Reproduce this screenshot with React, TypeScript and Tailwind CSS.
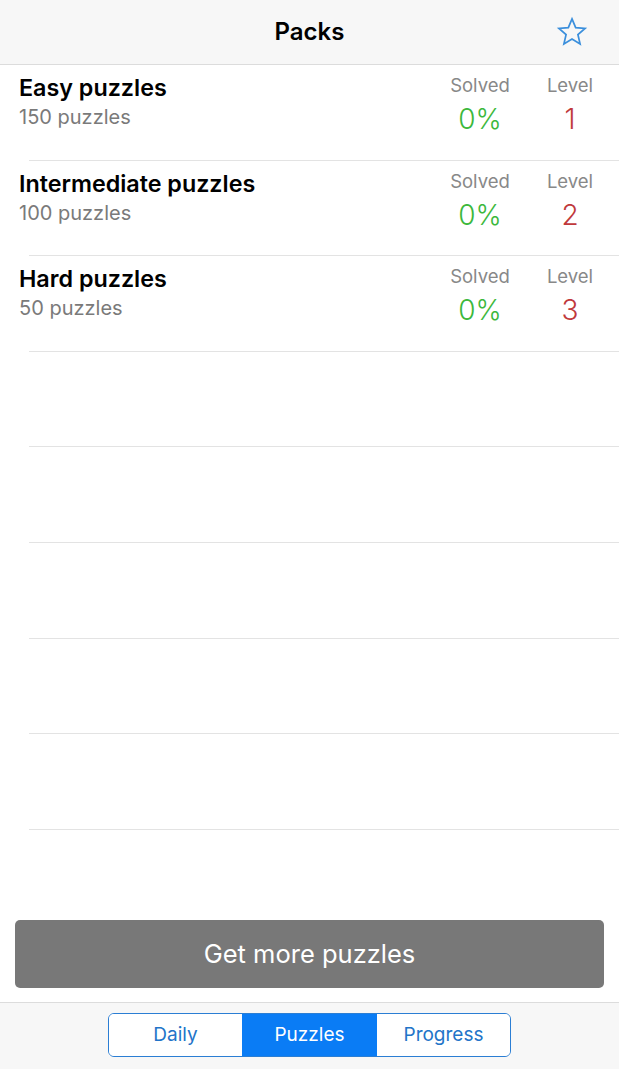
import React from "react";

const packs = [
  { title: "Easy puzzles", count: "150 puzzles", level: "1" },
  { title: "Intermediate puzzles", count: "100 puzzles", level: "2" },
  { title: "Hard puzzles", count: "50 puzzles", level: "3" },
];

function Star() {
  return (
    <svg width="32" height="32" viewBox="0 0 24 24" fill="none" stroke="#3b8fdc" strokeWidth="1.3" strokeLinejoin="miter">
      <path d="M12 2.2l2.75 6.55 7.05.6-5.35 4.65 1.6 6.9L12 17.2l-6.05 3.7 1.6-6.9L2.2 9.35l7.05-.6z" />
    </svg>
  );
}

export default function App() {
  return (
    <div className="w-[619px] h-[1069px] flex flex-col bg-white overflow-hidden" style={{ fontFamily: "Inter, 'Noto Sans', sans-serif" }}>
      <div className="h-[65px] shrink-0 bg-[#f7f7f7] border-b border-[#dcdcdc] relative flex items-center justify-center">
        <span className="text-[24px] font-semibold text-black">Packs</span>
        <div className="absolute right-[31px] top-[16px]">
          <Star />
        </div>
      </div>
      <div className="flex-1 flex flex-col">
        {Array.from({ length: 8 }).map((_, i) => {
          const p = packs[i];
          return (
            <div key={i} className="h-[95.6px] shrink-0 flex flex-col">
              <div className="flex-1 flex pl-[19px]">
                {p ? (
                  <>
                    <div className="flex-1 flex flex-col pt-[9px]">
                      <span className="text-[23.3px] leading-[28px] font-semibold text-black">{p.title}</span>
                      <span className="text-[20px] leading-[24px] text-[#7a7a7a] mt-[3px]">{p.count}</span>
                    </div>
                    <div className="w-[90px] flex flex-col items-center pt-[9px]">
                      <span className="text-[18.5px] leading-[22px] text-[#888888]">Solved</span>
                      <span className="text-[28px] leading-[34px] text-[#3cb83c] font-light mt-[6px]">0%</span>
                    </div>
                    <div className="w-[90px] mr-[4px] flex flex-col items-center pt-[9px]">
                      <span className="text-[18.5px] leading-[22px] text-[#888888]">Level</span>
                      <span className="text-[28px] leading-[34px] text-[#c0393b] font-light mt-[6px]">{p.level}</span>
                    </div>
                  </>
                ) : null}
              </div>
              <div className="ml-[29px] h-px bg-[#e3e3e3]" />
            </div>
          );
        })}
      </div>
      <div className="px-[15px] pb-[14px] shrink-0">
        <div className="h-[68px] rounded-[5px] bg-[#787878] flex items-center justify-center">
          <span className="text-[25.5px] text-white">Get more puzzles</span>
        </div>
      </div>
      <div className="h-[67px] shrink-0 bg-[#f7f7f7] border-t border-[#dcdcdc] flex justify-center pt-[10px]">
        <div className="w-[403px] h-[44px] flex rounded-[6px] border border-[#2b7ed4] overflow-hidden">
          <div className="w-[133px] flex items-center justify-center bg-white text-[19px] text-[#2274c8]">Daily</div>
          <div className="w-[135px] flex items-center justify-center bg-[#0a7cf5] text-[19px] text-white">Puzzles</div>
          <div className="flex-1 flex items-center justify-center bg-white text-[19px] text-[#2274c8]">Progress</div>
        </div>
      </div>
    </div>
  );
}
